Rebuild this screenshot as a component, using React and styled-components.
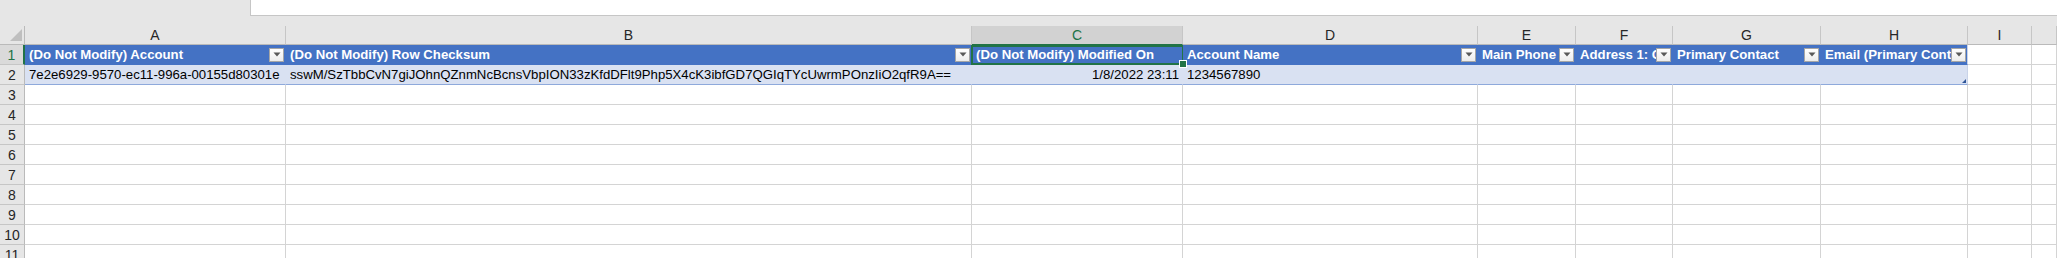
import React from 'react';
import styled, {createGlobalStyle, css} from 'styled-components';

const GlobalStyle = createGlobalStyle`
    html, body {
        margin: 0;
        padding: 0;
        background: #fff;
        overflow: hidden;
    }
    body {
        font-family: 'Liberation Sans', Arial, sans-serif;
        width: 2057px;
        height: 258px;
    }
`

const GREEN = '#217346'
const GRID = '#d4d4d4'
const HEAD_BG = '#e6e6e6'
const HEAD_LINE = '#c6c6c6'

const columns = [
    {key: 'A', width: 261},
    {key: 'B', width: 686},
    {key: 'C', width: 211},
    {key: 'D', width: 295},
    {key: 'E', width: 98},
    {key: 'F', width: 97},
    {key: 'G', width: 148},
    {key: 'H', width: 147},
    {key: 'I', width: 64},
    {key: '', width: null},
]

const tableHeaders = [
    '(Do Not Modify) Account',
    '(Do Not Modify) Row Checksum',
    '(Do Not Modify) Modified On',
    'Account Name',
    'Main Phone',
    'Address 1: City',
    'Primary Contact',
    'Email (Primary Contact)',
]

const dataRow = [
    {text: '7e2e6929-9570-ec11-996a-00155d80301e'},
    {text: 'sswM/SzTbbCvN7giJOhnQZnmNcBcnsVbpION33zKfdDFlt9Php5X4cK3ibfGD7QGIqTYcUwrmPOnzIiO2qfR9A=='},
    {text: '1/8/2022 23:11', align: 'right'},
    {text: '1234567890'},
    {text: ''},
    {text: ''},
    {text: ''},
    {text: ''},
]

const TopBar = styled.div`
    height: 26px;
    background: ${HEAD_BG};
    display: flex;
    align-items: flex-start;
`

const FormulaBox = styled.div`
    margin-left: 250px;
    flex: 1;
    height: 15px;
    background: #fff;
    border-left: 1px solid ${HEAD_LINE};
    border-bottom: 1px solid ${HEAD_LINE};
`

const Sheet = styled.div`
    display: grid;
    grid-template-columns: 25px ${columns.map(c => c.width ? `${c.width}px` : '1fr').join(' ')};
    grid-auto-rows: 20px;
    grid-template-rows: 19px;
    font-size: 13.2px;
    color: #000;
`

const Corner = styled.div`
    background: ${HEAD_BG};
    border-right: 1px solid #bababa;
    border-bottom: 1px solid #bababa;
    box-sizing: border-box;
    display: flex;
    align-items: flex-end;
    justify-content: flex-end;
    padding: 0 2px 3px 0;
`

const ColHeader = styled.div`
    box-sizing: border-box;
    background: ${props => props.selected ? '#d2d2d2' : HEAD_BG};
    color: ${props => props.selected ? GREEN : '#262626'};
    border-right: 1px solid ${HEAD_LINE};
    border-bottom: 1px solid ${props => props.selected ? GREEN : '#bababa'};
    display: flex;
    align-items: center;
    justify-content: center;
    font-size: 14px;
`

const RowHeader = styled.div`
    box-sizing: border-box;
    background: ${props => props.selected ? '#dadada' : HEAD_BG};
    color: ${props => props.selected ? GREEN : '#262626'};
    border-right: ${props => props.selected ? `2px solid ${GREEN}` : '1px solid #bababa'};
    border-bottom: 1px solid ${HEAD_LINE};
    display: flex;
    align-items: center;
    justify-content: center;
    font-size: 14px;
`

const Cell = styled.div`
    position: relative;
    box-sizing: border-box;
    border-right: 1px solid ${GRID};
    border-bottom: 1px solid ${GRID};
    display: flex;
    align-items: center;
    padding: 0 3px 0 4px;
    white-space: nowrap;
    min-width: 0;
    justify-content: ${props => props.align === 'right' ? 'flex-end' : 'flex-start'};

    ${props => props.variant === 'head' && css`
        background: #4472c4;
        border-right-color: ${props.last ? '#c9d3e8' : '#4472c4'};
        border-bottom-color: #4472c4;
        color: #fff;
        font-weight: bold;
        padding-right: 1px;
    `}

    ${props => props.variant === 'band' && css`
        background: #d9e1f2;
        border-right-color: ${props.last ? '#c9d3e8' : '#d9e1f2'};
        border-bottom-color: #8ea9db;
    `}

    ${props => props.selected && css`
        &::after {
            content: '';
            position: absolute;
            left: -1px;
            top: 0;
            right: -2px;
            bottom: -1px;
            border: 2px solid ${GREEN};
            pointer-events: none;
        }
    `}
`

const CellText = styled.span`
    flex: 1;
    min-width: 0;
    overflow: hidden;
    text-align: ${props => props.align === 'right' ? 'right' : 'left'};
`

const FillHandle = styled.span`
    position: absolute;
    right: -5px;
    bottom: -4px;
    width: 6px;
    height: 6px;
    background: ${GREEN};
    border: 1px solid #fff;
    z-index: 2;
`

const ResizeHandle = styled.span`
    position: absolute;
    right: 1px;
    bottom: 1px;
    width: 0;
    height: 0;
    border-left: 4px solid transparent;
    border-bottom: 4px solid #2f5597;
`

const DropButton = styled.span`
    flex: none;
    width: 15px;
    height: 14px;
    box-sizing: border-box;
    background: linear-gradient(#ffffff, #ececec);
    border: 1px solid #a6a6a6;
    display: flex;
    align-items: center;
    justify-content: center;
`

const Arrow = () => (
    <svg width="8" height="5" viewBox="0 0 8 5">
        <path d="M0.5 0.5 L7.5 0.5 L4 4.5 Z" fill="#595959"/>
    </svg>
)

const CornerTriangle = () => (
    <svg width="12" height="12" viewBox="0 0 12 12">
        <path d="M12 0 L12 12 L0 12 Z" fill="#bfbfbf"/>
    </svg>
)

const HeaderRow = () => (
    <>
        <Corner><CornerTriangle/></Corner>
        {columns.map((c, i) => (
            <ColHeader key={i} selected={c.key === 'C'}>{c.key}</ColHeader>
        ))}
    </>
)

const TableHeadRow = () => (
    <>
        <RowHeader selected>1</RowHeader>
        {tableHeaders.map((h, i) => (
            <Cell key={i} variant={'head'} last={i === tableHeaders.length - 1} selected={i === 2}>
                <CellText>{h}</CellText>
                {i !== 2 && <DropButton><Arrow/></DropButton>}
                {i === 2 && <FillHandle/>}
            </Cell>
        ))}
        <Cell/>
        <Cell/>
    </>
)

const DataRow = () => (
    <>
        <RowHeader>2</RowHeader>
        {dataRow.map((d, i) => (
            <Cell key={i} variant={'band'} align={d.align} last={i === dataRow.length - 1}>
                <CellText align={d.align}>{d.text}</CellText>
                {i === dataRow.length - 1 && <ResizeHandle/>}
            </Cell>
        ))}
        <Cell/>
        <Cell/>
    </>
)

const EmptyRow = ({n}) => (
    <>
        <RowHeader>{n}</RowHeader>
        {columns.map((c, i) => <Cell key={i}/>)}
    </>
)

export default function App() {
    const emptyRows = [3, 4, 5, 6, 7, 8, 9, 10, 11]
    return (<>
        <GlobalStyle/>
        <TopBar><FormulaBox/></TopBar>
        <Sheet>
            <HeaderRow/>
            <TableHeadRow/>
            <DataRow/>
            {emptyRows.map(n => <EmptyRow key={n} n={n}/>)}
        </Sheet>
    </>)
}
